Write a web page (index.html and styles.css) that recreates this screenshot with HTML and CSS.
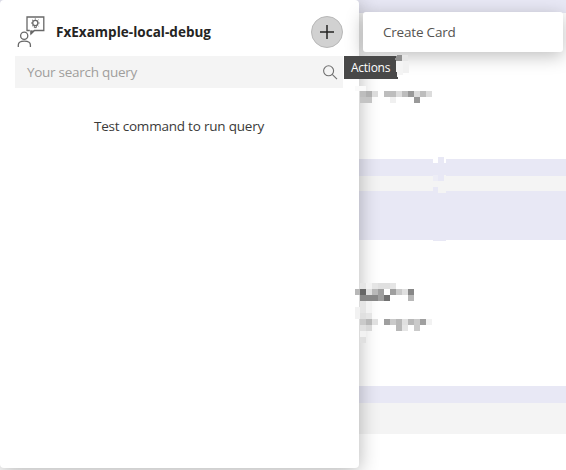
FILE: index.html
```html
<!DOCTYPE html>
<html lang="en">
<head>
<meta charset="utf-8">
<title>FxExample-local-debug</title>
<link rel="stylesheet" href="styles.css">
</head>
<body>
<div class="backdrop" aria-hidden="true">
  <div class="band lavender band-top"></div>
  <div class="band gap"></div>
  <div class="band lavender band-thin"></div>
  <div class="band gray band-slim"></div>
  <div class="band lavender band-tall"></div>
  <div class="band gap"></div>
  <div class="band lavender band-thin"></div>
  <div class="band gray band-low"></div>
</div>

<main class="panel">
  <header class="head">
    <svg class="app-icon" width="32" height="34" viewBox="0 0 32 34" fill="none" stroke="#686868" stroke-width="1.300">
      <path d="M14.800 15.500H12V2H28.800V15.500H19.500L16 19V15.500"/>
      <path d="M15.500 15.500H19.500L15.500 19.300Z" fill="#686868" stroke="none"/>
      <circle cx="20.300" cy="8" r="2.600"/>
      <path d="M19.300 10.400V12.600H21.300V10.400M20.300 3.400V4.600M16 8H17.200M23.400 8H24.600M17.100 4.800L18 5.700M23.500 4.800L22.600 5.700M17.200 11.100L18 10.400M23.400 11.100L22.600 10.400" stroke-width="1"/>
      <circle cx="9.200" cy="20.700" r="3.600"/>
      <path d="M3.300 32V30C3.300 24.800 15.400 24.800 15.400 30V32"/>
    </svg>
    <h1 class="title">FxExample-local-debug</h1>
    <button class="add" aria-label="Actions">
      <svg width="16" height="16" viewBox="0 0 16 16"><path d="M8 1V15M1 8H15" stroke="#252423" stroke-width="1.500"/></svg>
    </button>
  </header>
  <div class="search">
    <span class="placeholder">Your search query</span>
    <svg width="16" height="16" viewBox="0 0 16 16" fill="none" stroke="#707070" stroke-width="1.100"><circle cx="6.600" cy="6.800" r="5"/><path d="M10.200 10.400L15 15.200"/></svg>
  </div>
  <p class="message">Test command to run query</p>
</main>

<div class="menu"><span class="menu-item">Create Card</span></div>
<div class="tooltip"><span class="tip-text">Actions</span></div>

<svg class="mosaic" width="566" height="470" shape-rendering="crispEdges" aria-hidden="true">
  <path fill="#909090" d="M397 55h5v6h-6l-1-2z"/>
  <path fill="#f4f4f4" d="M396 61h7v14h-5v4l-2-10z"/>
  <path fill="#e6e6e6" d="M402 55h6v6h-6z"/>
  <path fill="#f1f1f1" d="M403 61h6v12h-6z"/>
  <path fill="#fafafa" d="M355 86h11v5h-11z"/>
  <path fill="#bdbdbd" d="M360 91h6v6h-6zM384 91h12v6h-12zM402 91h6v6h-6zM420 91h6v6h-6z"/>
  <path fill="#b0b0b0" d="M366 91h6v6h-6z"/>
  <path fill="#c4c4c4" d="M360 97h12v6h-12z"/>
  <path fill="#dcdcdc" d="M372 91h6v6h-6zM396 91h6v6h-6zM414 91h6v6h-6zM426 91h6v6h-6z"/>
  <path fill="#999" d="M408 91h6v6h-6zM414 97h6v6h-6z"/>
  <path fill="#f0f0f0" d="M390 97h6v6h-6z"/>

  <path fill="#fff" d="M433 159h13v4h-13z"/>
  <path fill="#e8e8f5" d="M438 157h6v6h-6zM438 176h6v5h-6zM433 187h5v4h-5zM433 240h13v1h-13z"/>
  <path fill="#ededf6" d="M433 175h5v6h-5z"/>
  <path fill="#f4f4f4" d="M438 191h8v2h-8zM444 175h2v1h-2z"/>

  <path fill="#e5e5e5" d="M360 283h6v6h-6zM372 283h6v6h-6zM390 283h6v6h-6zM360 301h6v6h-6zM360 307h6v6h-6zM366 313h6v6h-6zM402 325h6v6h-6z"/>
  <path fill="#f2f2f2" d="M366 283h6v6h-6zM366 301h6v6h-6zM355 307h5v12h-5zM366 307h6v6h-6zM426 319h6v6h-6zM360 331h6v6h-6z"/>
  <path fill="#e0e0e0" d="M378 283h12v6h-12zM366 289h6v6h-6zM402 289h6v6h-6zM360 313h6v6h-6zM372 319h6v6h-6zM402 319h6v6h-6zM360 325h6v6h-6zM360 337h6v6h-6z"/>
  <path fill="#666" d="M360 289h6v6h-6z"/>
  <path fill="#b8b8b8" d="M355 289h5v6h-5zM372 289h6v6h-6zM408 295h6v6h-6zM366 319h6v6h-6zM396 319h6v12h-6zM408 319h6v6h-6z"/>
  <path fill="#9f9f9f" d="M378 289h6v6h-6zM390 289h6v6h-6zM378 295h6v6h-6zM384 319h6v6h-6zM420 319h6v6h-6z"/>
  <path fill="#fff" d="M384 289h6v6h-6z"/>
  <path fill="#cacaca" d="M396 289h6v6h-6zM360 319h6v6h-6zM390 319h6v6h-6zM414 319h6v12h-6z"/>
  <path fill="#878787" d="M408 289h6v6h-6zM360 295h18v6h-18z"/>
  <path fill="#717171" d="M384 295h6v6h-6z"/>
  <path fill="#d8d8d8" d="M366 325h6v6h-6z"/>
</svg>
</body>
</html>
```
FILE: styles.css
```css
* { box-sizing: border-box; }

body {
  margin: 0;
  width: 566px;
  height: 470px;
  position: relative;
  overflow: hidden;
  background: #fff;
  color: #252423;
  font-family: "Open Sans", "Noto Sans", sans-serif;
  font-size: 13px;
}

.backdrop { display: flex; flex-direction: column; height: 470px; }
.band { flex: none; }
.lavender { background: #e8e8f5; }
.gray { background: #f4f4f4; }
.band-top { height: 13px; }
.gap { height: 146px; }
.band-thin { height: 17px; }
.band-slim { height: 15px; }
.band-tall { height: 49px; }
.band-low { height: 31px; }

/* Floating layers */
.panel {
  position: absolute;
  top: 0;
  left: 0;
  width: 359px;
  height: 468px;
  padding: 14px 16px 0 15px;
  background: #fff;
  border-radius: 4px;
  box-shadow: 0 3px 20px rgba(0, 0, 0, 0.3);
}

.head { display: flex; align-items: center; height: 36px; }
.app-icon { flex: none; }

.title {
  flex: 1;
  margin: 0 0 0 9px;
  font-size: 13.5px;
  font-weight: 700;
  line-height: 20px;
  letter-spacing: 0.02px;
  white-space: nowrap;
}

.add {
  display: flex;
  align-items: center;
  justify-content: center;
  width: 32px;
  height: 32px;
  padding: 0;
  border: 1px solid #b8b8b8;
  border-radius: 50%;
  background: #d1d1d1;
}

.search {
  display: flex;
  align-items: center;
  justify-content: space-between;
  height: 32px;
  margin-top: 6px;
  padding: 0 5px 0 12px;
  background: #f4f4f4;
}

.placeholder { color: #a09e9c; font-size: 13.5px; letter-spacing: -0.28px; }

.message {
  margin: 28px 0 0;
  text-align: center;
  font-size: 13.5px;
  line-height: 20px;
  letter-spacing: -0.21px;
  color: #3b3a39;
}

.menu {
  position: absolute;
  top: 12px;
  left: 363px;
  width: 200px;
  height: 40px;
  padding: 10px 20px;
  background: #fff;
  border-radius: 3px;
  box-shadow: 0 4px 18px rgba(0, 0, 0, 0.26);
  line-height: 20px;
}

.menu-item { color: #555351; font-size: 13.5px; letter-spacing: -0.2px; }

.tooltip {
  position: absolute;
  top: 56px;
  left: 344px;
  width: 54px;
  height: 23px;
  padding-left: 7px;
  background: #484848;
  color: #fff;
  font-size: 12px;
  line-height: 23px;
  letter-spacing: -0.25px;
}

.mosaic { position: absolute; top: 0; left: 0; pointer-events: none; }
```
